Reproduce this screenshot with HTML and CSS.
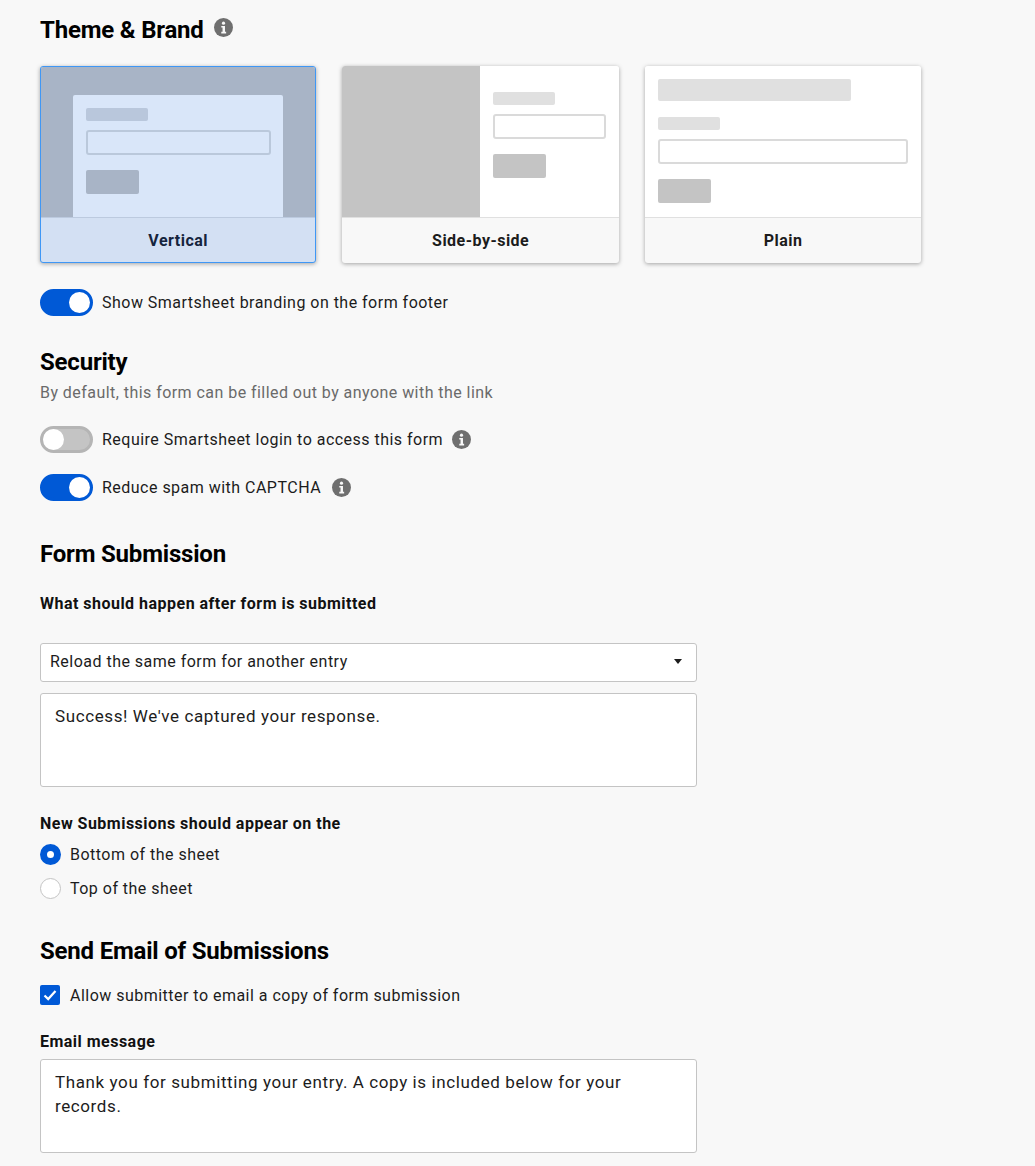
FILE: index.html
```html
<!DOCTYPE html>
<html lang="en">
<head>
    <meta charset="UTF-8">
    <title>Form Settings</title>
    <link rel="stylesheet" href="styles.css">
</head>
<body>
    <div class="settings">
        <div class="heading-row theme-heading">
            <h2>Theme &amp; Brand</h2>
            <svg class="info info-top" viewBox="0 0 18 18"><circle cx="9" cy="9" r="9" fill="#6f6f6f"/><circle cx="9" cy="4.9" r="1.5" fill="#f8f8f8"/><path d="M6.9 7.5h3.5v5.6h1.1v1.6H6.9v-1.6h1.2V9.1H6.9z" fill="#f8f8f8"/></svg>
        </div>

        <!-- Theme cards -->
        <div class="themes">
            <div class="theme selected">
                <div class="preview preview-vertical">
                    <div class="panel">
                        <div class="bar-label"></div>
                        <div class="bar-input"></div>
                        <div class="bar-button"></div>
                    </div>
                </div>
                <div class="theme-name">Vertical</div>
            </div>
            <div class="theme">
                <div class="preview preview-side">
                    <div class="side-image"></div>
                    <div class="side-form">
                        <div class="bar-label"></div>
                        <div class="bar-input"></div>
                        <div class="bar-button"></div>
                    </div>
                </div>
                <div class="theme-name">Side-by-side</div>
            </div>
            <div class="theme">
                <div class="preview preview-plain">
                    <div class="bar-title"></div>
                    <div class="bar-label"></div>
                    <div class="bar-input"></div>
                    <div class="bar-button"></div>
                </div>
                <div class="theme-name">Plain</div>
            </div>
        </div>

        <div class="toggle-row branding">
            <span class="toggle on"></span>
            <span>Show Smartsheet branding on the form footer</span>
        </div>

        <h2 class="security-title">Security</h2>
        <p class="hint">By default, this form can be filled out by anyone with the link</p>
        <div class="toggle-row login">
            <span class="toggle"></span>
            <span>Require Smartsheet login to access this form</span>
            <svg class="info" viewBox="0 0 18 18"><circle cx="9" cy="9" r="9" fill="#6f6f6f"/><circle cx="9" cy="4.9" r="1.5" fill="#f8f8f8"/><path d="M6.9 7.5h3.5v5.6h1.1v1.6H6.9v-1.6h1.2V9.1H6.9z" fill="#f8f8f8"/></svg>
        </div>
        <div class="toggle-row captcha">
            <span class="toggle on"></span>
            <span>Reduce spam with CAPTCHA</span>
            <svg class="info" viewBox="0 0 18 18"><circle cx="9" cy="9" r="9" fill="#6f6f6f"/><circle cx="9" cy="4.9" r="1.5" fill="#f8f8f8"/><path d="M6.9 7.5h3.5v5.6h1.1v1.6H6.9v-1.6h1.2V9.1H6.9z" fill="#f8f8f8"/></svg>
        </div>

        <h2 class="submission-title">Form Submission</h2>
        <div class="field-label after-label">What should happen after form is submitted</div>
        <div class="select">
            <span>Reload the same form for another entry</span>
            <span class="caret"></span>
        </div>
        <div class="textbox success">Success! We've captured your response.</div>

        <div class="field-label position-label">New Submissions should appear on the</div>
        <div class="radio-row">
            <span class="radio checked"></span>
            <span>Bottom of the sheet</span>
        </div>
        <div class="radio-row">
            <span class="radio"></span>
            <span>Top of the sheet</span>
        </div>

        <h2 class="email-title">Send Email of Submissions</h2>
        <div class="check-row">
            <span class="checkbox">
                <svg viewBox="0 0 20 20"><path d="M4.5 10.5l3.7 3.6 7.3-8" fill="none" stroke="#fff" stroke-width="2.2"/></svg>
            </span>
            <span>Allow submitter to email a copy of form submission</span>
        </div>
        <div class="field-label message-label">Email message</div>
        <div class="textbox">Thank you for submitting your entry. A copy is included below for your records.</div>
    </div>
</body>
</html>
```

FILE: styles.css
```css
* {
    box-sizing: border-box;
}

html, body {
    height: 100%;
}

body {
    margin: 0;
    background-color: #f8f8f8;
    color: #1c1c1c;
    font-family: Roboto, "Liberation Sans", sans-serif;
    font-size: 16px;
    letter-spacing: 0.48px;
    overflow: hidden;
}

.settings {
    padding: 16px 0 0 40px;
}

h2 {
    margin: 0;
    color: #000;
    font-size: 24px;
    font-weight: 700;
    letter-spacing: -0.2px;
    line-height: 28px;
}

.heading-row {
    display: flex;
    align-items: flex-start;
    gap: 10px;
}

.info {
    width: 19px;
    height: 19px;
    flex: none;
}

.info-top {
    margin-top: 2px;
}

/* Theme cards */
.themes {
    display: flex;
    gap: 26.17px;
    margin-top: 22px;
}

.theme {
    width: 276.33px;
    height: 197px;
    background-color: #f8f8f8;
    border-radius: 3px;
    box-shadow: 0 1px 4px rgba(0, 0, 0, 0.35);
    overflow: hidden;
}

.preview {
    height: 152px;
    background-color: #fff;
    border-bottom: 1px solid #e0e0e0;
}

.theme-name {
    height: 45px;
    font-weight: 700;
    line-height: 45px;
    text-align: center;
}

.bar-title,
.bar-label,
.bar-button {
    border-radius: 2px;
}

.bar-title {
    width: 193px;
    height: 22px;
    margin-bottom: 16px;
    background-color: #e0e0e0;
}

.bar-label {
    width: 62px;
    height: 13px;
    margin-bottom: 9px;
    background-color: #e0e0e0;
}

.bar-input {
    height: 25px;
    margin-bottom: 15px;
    background-color: #fff;
    border: 2px solid #dadada;
    border-radius: 3px;
}

.bar-button {
    width: 53px;
    height: 24px;
    background-color: #c4c4c4;
}

.preview-side {
    display: flex;
}

.side-image {
    width: 138px;
    background-color: #c4c4c4;
}

.side-form {
    width: 113px;
    margin-left: 13px;
    padding-top: 26px;
}

.preview-plain {
    padding: 13px 13px 0 13.5px;
}

/* Selected card keeps the same size, border is inside the box */
.theme.selected {
    background-color: #d3e0f3;
    border: 1px solid #3f97f5;
    color: #15243d;
}

.selected .preview {
    height: 151px;
    padding: 28px 32px 0;
    background-color: #a8b4c6;
    border-bottom-color: #bccadf;
}

.selected .theme-name {
    line-height: 46px;
}

.panel {
    height: 122px;
    padding: 13px 12px 0 13px;
    background-color: #d9e6f9;
    border-radius: 2px 2px 0 0;
}

.panel .bar-label {
    background-color: #b9c7dc;
}

.panel .bar-input {
    background-color: #d9e6f9;
    border-color: #bac8db;
}

.panel .bar-button {
    background-color: #a8b4c6;
}

/* Toggles */
.toggle-row {
    display: flex;
    align-items: center;
    gap: 9px;
    height: 27px;
}

.toggle {
    position: relative;
    width: 53px;
    height: 27px;
    flex: none;
    background-color: #c4c4c4;
    border: 3px solid #b5b5b5;
    border-radius: 14px;
}

.toggle::after {
    content: "";
    position: absolute;
    top: 0;
    left: 0;
    width: 21px;
    height: 21px;
    background-color: #fff;
    border-radius: 50%;
}

.toggle.on {
    background-color: #0059d6;
    border-color: #0059d6;
}

.toggle.on::after {
    left: 26px;
}

.branding {
    margin-top: 26px;
}

.security-title {
    margin-top: 32px;
}

.hint {
    margin: 5px 0 0;
    color: #6a6a6a;
    letter-spacing: 0.45px;
    line-height: 24px;
}

.login {
    margin-top: 21px;
}

.captcha {
    margin-top: 21px;
}

.captcha .info {
    margin-left: 2px;
}

.submission-title {
    margin-top: 39px;
}

/* Fields */
.field-label {
    color: #111;
    font-weight: 700;
    line-height: 20px;
}

.after-label {
    margin-top: 26px;
}

.select {
    display: flex;
    align-items: center;
    justify-content: space-between;
    width: 657px;
    height: 39px;
    margin-top: 29px;
    padding: 0 14px 2px 9px;
    background-color: #fff;
    border: 1px solid #c4c4c4;
    border-radius: 3px;
}

.caret {
    width: 0;
    height: 0;
    border-top: 5px solid #1c1c1c;
    border-left: 4px solid transparent;
    border-right: 4px solid transparent;
}

.textbox {
    width: 657px;
    height: 94px;
    padding: 10px 14px;
    background-color: #fff;
    border: 1px solid #c4c4c4;
    border-radius: 3px;
    font-size: 17px;
    letter-spacing: 0.6px;
    line-height: 24px;
}

.success {
    margin-top: 11px;
}

.position-label {
    margin-top: 27px;
}

.radio-row {
    display: flex;
    align-items: center;
    gap: 9px;
    height: 22px;
    margin-top: 12px;
}

.position-label + .radio-row {
    margin-top: 9px;
}

.radio {
    width: 21px;
    height: 21px;
    flex: none;
    background-color: #fff;
    border: 1px solid #c4c4c4;
    border-radius: 50%;
}

.radio.checked {
    border: 7px solid #0059d6;
}

.email-title {
    margin-top: 38px;
}

.check-row {
    display: flex;
    align-items: center;
    gap: 10px;
    height: 20px;
    margin-top: 20px;
}

.checkbox {
    width: 20px;
    height: 20px;
    flex: none;
    background-color: #0059d6;
    border-radius: 2px;
}

.checkbox svg {
    display: block;
}

.message-label {
    margin-top: 27px;
    margin-bottom: 7px;
}
```
